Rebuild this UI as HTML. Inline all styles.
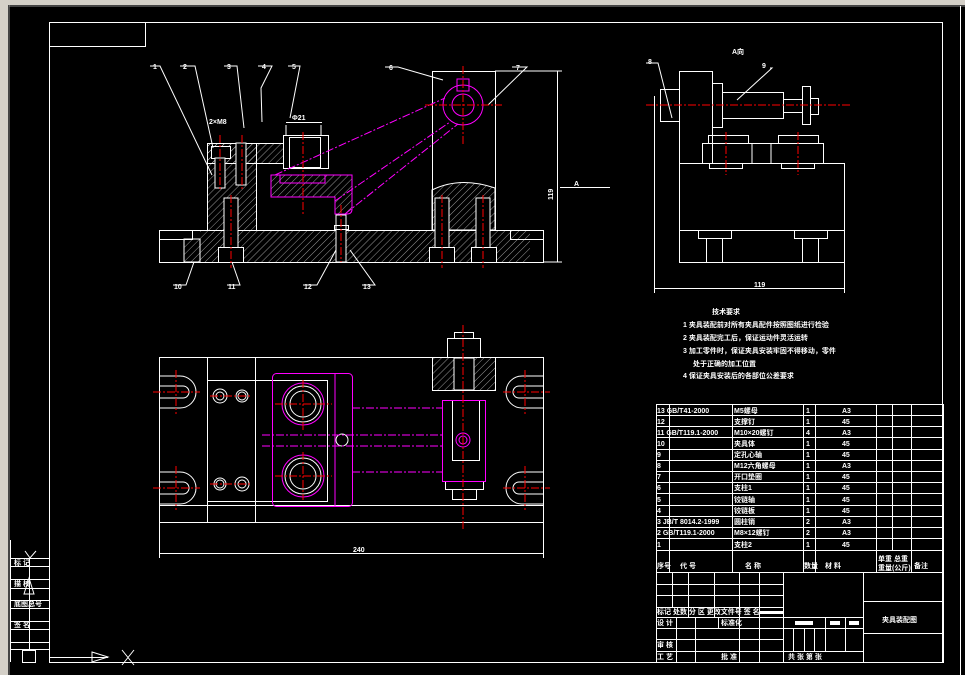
<!DOCTYPE html>
<html><head><meta charset="utf-8"><style>
html,body{margin:0;padding:0;background:#000;width:965px;height:675px;overflow:hidden}
svg{display:block}
text{font-family:"Liberation Sans","Noto Sans CJK SC",sans-serif;fill:#fff;font-size:7px;font-weight:bold}
</style></head><body>
<svg width="965" height="675" viewBox="0 0 965 675" xmlns="http://www.w3.org/2000/svg">
<defs>
<pattern id="h" width="5" height="5" patternUnits="userSpaceOnUse" patternTransform="rotate(45)"><line x1="0" y1="0" x2="0" y2="5" stroke="#fff" stroke-width="0.6"/></pattern>
</defs>
<rect x="0" y="0" width="965" height="675" fill="#000"/>
<rect x="0" y="0" width="8" height="675" fill="#d4d0c8"/>
<rect x="0" y="0" width="965" height="5" fill="#d4d0c8"/>
<line x1="9" y1="5" x2="9" y2="675" stroke="#888"/>
<line x1="9" y1="6" x2="965" y2="6" stroke="#888"/>
<g fill="none" stroke="#fff" stroke-width="1">
<!-- border -->
<rect x="49.5" y="22.5" width="893" height="640"/>
<rect x="49.5" y="22.5" width="96" height="24"/>
<line x1="960.5" y1="6" x2="960.5" y2="675"/>
<!-- left strip -->
<line x1="10" y1="558.5" x2="49" y2="558.5"/><line x1="10" y1="566.5" x2="49" y2="566.5"/>
<line x1="10" y1="579.5" x2="49" y2="579.5"/><line x1="10" y1="588.5" x2="49" y2="588.5"/>
<line x1="10" y1="600.5" x2="49" y2="600.5"/><line x1="10" y1="608.5" x2="49" y2="608.5"/>
<line x1="10" y1="621.5" x2="49" y2="621.5"/><line x1="10" y1="629.5" x2="49" y2="629.5"/>
<line x1="10" y1="642.5" x2="49" y2="642.5"/><line x1="10" y1="649.5" x2="49" y2="649.5"/>
<line x1="10.5" y1="540" x2="10.5" y2="662"/>
<line x1="29.5" y1="558" x2="29.5" y2="649"/>
<rect x="22.5" y="650.5" width="13" height="12"/>
<path d="M25 551 L30 558 L36 551"/>
<path d="M29 578 L24 594 L34 594 Z"/>
<line x1="49" y1="657.5" x2="108" y2="657.5"/>
<path d="M92 652 L108 657 L92 662 Z"/>
<path d="M122 650 L134 665 M134 650 L122 665"/>
<!-- front view -->
<rect x="159.5" y="230.5" width="384" height="32"/>
<rect x="159.5" y="230.5" width="33" height="9"/>
<rect x="510.5" y="230.5" width="33" height="9"/>
<rect x="184" y="239" width="16" height="23" fill="url(#h)"/>
<rect x="207.5" y="143.5" width="49" height="87" fill="url(#h)"/>
<rect x="207.5" y="143.5" width="80" height="20" fill="url(#h)"/>
<rect x="200" y="231" width="330" height="31" fill="url(#h)" stroke="none"/>
<rect x="283.5" y="135.5" width="45" height="33" fill="#000"/>
<rect x="289.5" y="137.5" width="31" height="30"/>
<line x1="286" y1="125" x2="286" y2="135"/><line x1="321" y1="125" x2="321" y2="135"/>
<line x1="286" y1="122.5" x2="322" y2="122.5"/>
<rect x="432.5" y="71.5" width="63" height="159"/>
<path d="M432 190 Q460 176 495 188 L495 230 L432 230 Z" fill="url(#h)"/>
<rect x="211.5" y="146.5" width="19" height="12" fill="#000"/>
<rect x="215" y="158" width="10" height="30" fill="#000"/>
<rect x="236" y="143" width="10" height="42" fill="#000"/>
<rect x="224" y="198" width="14" height="54" fill="#000"/>
<rect x="218.5" y="247.5" width="25" height="15" fill="#000"/>
<rect x="435" y="198" width="14" height="54" fill="#000"/>
<rect x="476" y="198" width="14" height="54" fill="#000"/>
<rect x="429.5" y="247.5" width="25" height="15" fill="#000"/>
<rect x="471.5" y="247.5" width="25" height="15" fill="#000"/>
<rect x="336" y="215" width="10" height="47" fill="#000"/>
<rect x="334.5" y="225.5" width="14" height="4"/>
<line x1="557.5" y1="71" x2="557.5" y2="262"/>
<line x1="495" y1="71" x2="562" y2="71"/><line x1="543" y1="262" x2="562" y2="262"/>
<line x1="560" y1="187.5" x2="610" y2="187.5"/>
<!-- leaders -->
<path d="M150 66 H160 L212 175"/><path d="M180 66 H195 L213 148"/><path d="M224 66 H237 L244 128"/>
<path d="M258 66 H272 L261 88 L262 122"/><path d="M288 66 H300 L290 118"/>
<path d="M385 67 H398 L443 80"/><path d="M512 67 H527 L488 105"/>
<path d="M173 285 H186 L194 262"/><path d="M227 285 H240 L232 262"/>
<path d="M303 285 H317 L336 250"/><path d="M362 285 H375 L350 250"/>
<!-- right view -->
<rect x="679.5" y="163.5" width="165" height="99"/>
<line x1="679" y1="230.5" x2="844" y2="230.5"/>
<rect x="679.5" y="71.5" width="33" height="92"/>
<rect x="702.5" y="143.5" width="121" height="20"/>
<line x1="752" y1="143" x2="752" y2="163"/><line x1="771" y1="143" x2="771" y2="163"/>
<rect x="708.5" y="135.5" width="40" height="8"/><rect x="778.5" y="135.5" width="40" height="8"/>
<rect x="709.5" y="163.5" width="33" height="5"/><rect x="781.5" y="163.5" width="33" height="5"/>
<rect x="698.5" y="230.5" width="33" height="8"/><rect x="794.5" y="230.5" width="33" height="8"/>
<line x1="706.5" y1="238" x2="706.5" y2="262"/><line x1="722.5" y1="238" x2="722.5" y2="262"/>
<line x1="802.5" y1="238" x2="802.5" y2="262"/><line x1="818.5" y1="238" x2="818.5" y2="262"/>
<rect x="712.5" y="83.5" width="10" height="44"/>
<rect x="722.5" y="92.5" width="61" height="26"/>
<rect x="783.5" y="99.5" width="19" height="13"/>
<rect x="802.5" y="86.5" width="8" height="38"/>
<rect x="810.5" y="98.5" width="8" height="16"/>
<rect x="660.5" y="89.5" width="19" height="32"/>
<line x1="654.5" y1="96" x2="654.5" y2="293"/><line x1="844.5" y1="262" x2="844.5" y2="293"/>
<line x1="654" y1="288.5" x2="844" y2="288.5"/>
<path d="M646 63 H658 L672 118"/><path d="M770 68 H772 L737 100"/>
<!-- plan view -->
<rect x="159.5" y="357.5" width="384" height="165"/>
<line x1="159" y1="505.5" x2="543" y2="505.5"/>
<line x1="207.5" y1="357" x2="207.5" y2="522"/><line x1="255.5" y1="357" x2="255.5" y2="522"/>
<rect x="207.5" y="380.5" width="120" height="121"/>
<rect x="432.5" y="357.5" width="63" height="33" fill="url(#h)"/>
<rect x="447.5" y="338.5" width="33" height="19" fill="#000"/>
<rect x="454.5" y="332.5" width="19" height="6"/>
<rect x="454" y="358" width="20" height="32" fill="#000"/>
<rect x="452.5" y="400.5" width="27" height="60"/>
<rect x="445.5" y="481.5" width="38" height="8"/>
<rect x="452.5" y="489.5" width="24" height="10"/>
<path d="M159 376 H180 A16 16 0 0 1 180 408 H159 M159 386 H183 A6 6 0 0 1 183 398 H159"/>
<path d="M159 472 H180 A16 16 0 0 1 180 504 H159 M159 482 H183 A6 6 0 0 1 183 494 H159"/>
<path d="M543 376 H522 A16 16 0 0 0 522 408 H543 M543 386 H519 A6 6 0 0 0 519 398 H543"/>
<path d="M543 472 H522 A16 16 0 0 0 522 504 H543 M543 482 H519 A6 6 0 0 0 519 494 H543"/>
<circle cx="220" cy="396" r="7"/><circle cx="220" cy="396" r="4"/>
<circle cx="242" cy="396" r="6"/><circle cx="242" cy="396" r="4"/>
<circle cx="220" cy="484" r="6"/><circle cx="220" cy="484" r="4"/>
<circle cx="242" cy="484" r="7"/><circle cx="242" cy="484" r="4"/>
<circle cx="303" cy="404" r="18"/><circle cx="303" cy="404" r="13"/>
<circle cx="303" cy="476" r="18"/><circle cx="303" cy="476" r="13"/>
<circle cx="342" cy="440" r="6"/>
<line x1="159" y1="553.5" x2="543" y2="553.5"/>
<line x1="159.5" y1="522" x2="159.5" y2="558"/><line x1="543.5" y1="522" x2="543.5" y2="558"/>
<!-- table -->
<rect x="656.5" y="404.5" width="287" height="258"/>
<line x1="656" y1="415.5" x2="943" y2="415.5"/><line x1="656" y1="426.5" x2="943" y2="426.5"/>
<line x1="656" y1="437.5" x2="943" y2="437.5"/><line x1="656" y1="449.5" x2="943" y2="449.5"/>
<line x1="656" y1="460.5" x2="943" y2="460.5"/><line x1="656" y1="471.5" x2="943" y2="471.5"/>
<line x1="656" y1="482.5" x2="943" y2="482.5"/><line x1="656" y1="493.5" x2="943" y2="493.5"/>
<line x1="656" y1="505.5" x2="943" y2="505.5"/><line x1="656" y1="516.5" x2="943" y2="516.5"/>
<line x1="656" y1="527.5" x2="943" y2="527.5"/><line x1="656" y1="538.5" x2="943" y2="538.5"/>
<line x1="656" y1="550.5" x2="943" y2="550.5"/><line x1="656" y1="572.5" x2="943" y2="572.5"/>
<line x1="669.5" y1="404" x2="669.5" y2="572"/><line x1="732.5" y1="404" x2="732.5" y2="572"/>
<line x1="803.5" y1="404" x2="803.5" y2="572"/><line x1="815.5" y1="404" x2="815.5" y2="572"/>
<line x1="876.5" y1="404" x2="876.5" y2="572"/><line x1="892.5" y1="404" x2="892.5" y2="550"/>
<line x1="911.5" y1="404" x2="911.5" y2="572"/>
<line x1="656" y1="584.5" x2="783" y2="584.5"/><line x1="656" y1="595.5" x2="783" y2="595.5"/>
<line x1="656" y1="607.5" x2="783" y2="607.5"/><line x1="656" y1="617.5" x2="863" y2="617.5"/>
<line x1="656" y1="628.5" x2="863" y2="628.5"/><line x1="656" y1="639.5" x2="783" y2="639.5"/>
<line x1="656" y1="651.5" x2="863" y2="651.5"/>
<line x1="863.5" y1="601.5" x2="943" y2="601.5"/><line x1="863.5" y1="633.5" x2="943" y2="633.5"/>
<line x1="672.5" y1="572" x2="672.5" y2="607"/><line x1="688.5" y1="572" x2="688.5" y2="617"/>
<line x1="714.5" y1="572" x2="714.5" y2="617"/><line x1="739.5" y1="572" x2="739.5" y2="662"/>
<line x1="759.5" y1="572" x2="759.5" y2="662"/><line x1="783.5" y1="572" x2="783.5" y2="662"/>
<line x1="863.5" y1="572" x2="863.5" y2="662"/>
<line x1="676.5" y1="617" x2="676.5" y2="662"/><line x1="695.5" y1="617" x2="695.5" y2="662"/>
<line x1="718.5" y1="617" x2="718.5" y2="628"/>
<line x1="825.5" y1="617" x2="825.5" y2="651"/><line x1="845.5" y1="617" x2="845.5" y2="651"/>
<line x1="804.5" y1="628" x2="804.5" y2="651"/><line x1="814.5" y1="628" x2="814.5" y2="651"/>
<line x1="793.5" y1="628" x2="793.5" y2="651"/>
</g>
<g fill="#fff">
<rect x="760" y="611" width="23" height="3"/>
<rect x="795" y="621" width="18" height="4"/><rect x="830" y="621" width="10" height="4"/><rect x="849" y="621" width="10" height="4"/>
</g>
<!-- magenta -->
<g fill="none" stroke="#f0f" stroke-width="1">
<path d="M271 175 H352 V209 Q352 214 347 214 H335 V197 H271 Z" fill="url(#h)"/>
<rect x="280" y="175" width="45" height="8"/>
<circle cx="463" cy="105" r="20"/><circle cx="463" cy="105" r="11"/>
<rect x="457" y="79" width="12" height="12"/>
<path d="M275 175 L445 98 M345 214 L458 124" stroke-dasharray="8 2 2 2"/>
<path d="M335 201 L450 122" stroke-dasharray="8 2 2 2"/>
<rect x="272.5" y="373.5" width="80" height="133" rx="4"/>
<line x1="335" y1="374" x2="335" y2="506"/>
<circle cx="303" cy="404" r="21"/><circle cx="303" cy="476" r="21"/>
<path d="M352 408 H442 M352 472 H442 M262 435 H442 M262 446 H442" stroke-dasharray="8 2 2 2"/>
<rect x="442.5" y="400.5" width="43" height="81"/>
<circle cx="463" cy="440" r="7"/><circle cx="463" cy="440" r="4"/>
</g>
<!-- red center lines -->
<g stroke="#f00" stroke-width="1" stroke-dasharray="8 2 2 2">
<line x1="220" y1="135" x2="220" y2="190"/><line x1="242" y1="135" x2="242" y2="190"/>
<line x1="231" y1="195" x2="231" y2="268"/><line x1="442" y1="195" x2="442" y2="268"/><line x1="483" y1="195" x2="483" y2="268"/>
<line x1="463" y1="66" x2="463" y2="145"/><line x1="425" y1="105" x2="502" y2="105"/>
<line x1="303" y1="132" x2="303" y2="215"/><line x1="341" y1="205" x2="341" y2="262"/>
<line x1="646" y1="105" x2="852" y2="105"/>
<line x1="726" y1="132" x2="726" y2="175"/><line x1="798" y1="132" x2="798" y2="175"/>
<line x1="153" y1="392" x2="200" y2="392"/><line x1="153" y1="488" x2="200" y2="488"/>
<line x1="503" y1="392" x2="550" y2="392"/><line x1="503" y1="488" x2="550" y2="488"/>
<line x1="176" y1="370" x2="176" y2="414"/><line x1="176" y1="466" x2="176" y2="510"/>
<line x1="525" y1="370" x2="525" y2="414"/><line x1="525" y1="466" x2="525" y2="510"/>
<line x1="463" y1="325" x2="463" y2="530"/>
<line x1="275" y1="404" x2="332" y2="404"/><line x1="303" y1="380" x2="303" y2="430"/>
<line x1="275" y1="476" x2="332" y2="476"/><line x1="303" y1="452" x2="303" y2="500"/>
<line x1="210" y1="396" x2="252" y2="396"/><line x1="210" y1="484" x2="252" y2="484"/>
</g>
<!-- text -->
<text x="153" y="69">1</text><text x="183" y="69">2</text><text x="227" y="69">3</text>
<text x="262" y="69">4</text><text x="292" y="69">5</text><text x="389" y="70">6</text><text x="516" y="70">7</text>
<text x="174" y="289">10</text><text x="228" y="289">11</text><text x="304" y="289">12</text><text x="363" y="289">13</text>
<text x="209" y="124" font-size="6">2×M8</text><text x="292" y="120" font-size="6">Φ21</text>
<text x="574" y="186">A</text>
<text x="553" y="200" transform="rotate(-90 553 200)">119</text>
<text x="648" y="64">8</text><text x="762" y="68">9</text><text x="732" y="54">A向</text>
<text x="754" y="287">119</text><text x="353" y="552">240</text>
<text x="712" y="314">技术要求</text>
<text x="683" y="327">1 夹具装配前对所有夹具配件按照图纸进行检验</text>
<text x="683" y="340">2 夹具装配完工后，保证运动件灵活运转</text>
<text x="683" y="353">3 加工零件时，保证夹具安装牢固不得移动，零件</text>
<text x="693" y="366">处于正确的加工位置</text>
<text x="683" y="378">4 保证夹具安装后的各部位公差要求</text>
<g font-size="6">
<text x="657" y="413">13 GB/T41-2000</text><text x="734" y="413">M5螺母</text><text x="806" y="413">1</text><text x="842" y="413">A3</text>
<text x="657" y="424">12</text><text x="734" y="424">支撑钉</text><text x="806" y="424">1</text><text x="842" y="424">45</text>
<text x="657" y="435">11 GB/T119.1-2000</text><text x="734" y="435">M10×20螺钉</text><text x="806" y="435">4</text><text x="842" y="435">A3</text>
<text x="657" y="446">10</text><text x="734" y="446">夹具体</text><text x="806" y="446">1</text><text x="842" y="446">45</text>
<text x="657" y="457">9</text><text x="734" y="457">定孔心轴</text><text x="806" y="457">1</text><text x="842" y="457">45</text>
<text x="657" y="468">8</text><text x="734" y="468">M12六角螺母</text><text x="806" y="468">1</text><text x="842" y="468">A3</text>
<text x="657" y="479">7</text><text x="734" y="479">开口垫圈</text><text x="806" y="479">1</text><text x="842" y="479">45</text>
<text x="657" y="490">6</text><text x="734" y="490">支柱1</text><text x="806" y="490">1</text><text x="842" y="490">45</text>
<text x="657" y="502">5</text><text x="734" y="502">铰链轴</text><text x="806" y="502">1</text><text x="842" y="502">45</text>
<text x="657" y="513">4</text><text x="734" y="513">铰链板</text><text x="806" y="513">1</text><text x="842" y="513">45</text>
<text x="657" y="524">3 JB/T 8014.2-1999</text><text x="734" y="524">圆柱销</text><text x="806" y="524">2</text><text x="842" y="524">A3</text>
<text x="657" y="535">2 GB/T119.1-2000</text><text x="734" y="535">M8×12螺钉</text><text x="806" y="535">2</text><text x="842" y="535">A3</text>
<text x="657" y="547">1</text><text x="734" y="547">支柱2</text><text x="806" y="547">1</text><text x="842" y="547">45</text>
<text x="878" y="561">单重 总重</text><text x="878" y="570">重量(公斤)</text>
<text x="657" y="614">标记 处数 分 区 更改文件号 签 名</text>
<text x="657" y="625">设 计</text><text x="721" y="625">标准化</text>
<text x="657" y="647">审 核</text><text x="657" y="659">工 艺</text><text x="721" y="659">批 准</text>
<text x="788" y="659">共 张 第 张</text>
<text x="882" y="622">夹具装配图</text>
<text x="14" y="565">标 记</text><text x="14" y="586">描 校</text><text x="14" y="606">底图总号</text><text x="14" y="627">签 名</text>
</g>
<g font-size="10"><text x="657" y="568">序号</text><text x="680" y="568">代  号</text><text x="745" y="568">名   称</text>
<text x="804" y="568" font-size="6">数量</text><text x="825" y="568">材  料</text><text x="914" y="568">备注</text></g>
</svg>
</body></html>
